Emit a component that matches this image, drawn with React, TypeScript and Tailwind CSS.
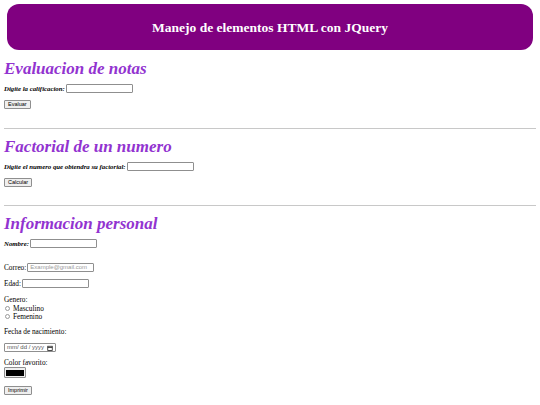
import { useState } from "react";

const serif = "font-['Liberation_Serif',serif]";
const sans = "font-['Liberation_Sans',sans-serif]";

function Heading({ children }: { children: string }) {
  return <h2 className={`${serif} text-[17px] font-bold italic leading-[20px] text-[#9233d0]`}>{children}</h2>;
}

function Field({ w, placeholder }: { w: string; placeholder?: string }) {
  return (
    <input
      type="text"
      placeholder={placeholder}
      className={`${w} ${sans} h-[9px] rounded-[1px] border border-[#8f8f8f] bg-white px-[2px] text-[6px] text-black outline-none placeholder:text-[#9a9a9a]`}
    />
  );
}

function Btn({ children }: { children: string }) {
  return (
    <button
      type="button"
      className={`${sans} h-[9px] rounded-[1px] border border-[#8f8f8f] bg-[#efefef] px-[3px] text-[5.5px] leading-[7px] text-black`}
    >
      {children}
    </button>
  );
}

function Radio({ label, name }: { label: string; name: string }) {
  return (
    <label className="flex h-[8px] items-center gap-[3px] pl-[1px]">
      <span className="h-[5px] w-[5px] rounded-full border border-[#9a9a9a] bg-white" />
      <input type="radio" name={name} className="hidden" />
      {label}
    </label>
  );
}

export default function App() {
  const [color] = useState("#000000");

  return (
    <div className={`${serif} min-h-[405px] bg-white pt-[4px] text-[7.3px] leading-[9px] text-black`}>
      <header className="mx-[7px] flex h-[46px] items-center justify-center rounded-[12px] bg-[#800080]">
        <h1 className={`${serif} pt-[1px] text-[13.5px] font-bold text-white`}>Manejo de elementos HTML con JQuery</h1>
      </header>

      <main className="px-[4px]">
        <section className="pt-[9px]">
          <Heading>Evaluacion de notas</Heading>
          <div className="mt-[5px] flex items-center gap-[1px]">
            <span className="text-[6.8px] font-bold italic">Digite la calificacion:</span>
            <Field w="w-[67px]" />
          </div>
          <div className="mt-[7px] flex">
            <Btn>Evaluar</Btn>
          </div>
        </section>

        <hr className="mt-[19px] border-t border-[#c8c8c8]" />

        <section className="pt-[8px]">
          <Heading>Factorial de un numero</Heading>
          <div className="mt-[5px] flex items-center gap-[1px]">
            <span className="text-[6.8px] font-bold italic">Digite el numero que obtendra su factorial:</span>
            <Field w="w-[67px]" />
          </div>
          <div className="mt-[7px] flex">
            <Btn>Calcular</Btn>
          </div>
        </section>

        <hr className="mt-[18px] border-t border-[#c8c8c8]" />

        <section className="pt-[8px]">
          <Heading>Informacion personal</Heading>
          <div className="mt-[5px] flex items-center gap-[1px]">
            <span className="text-[6.8px] font-bold italic">Nombre:</span>
            <Field w="w-[67px]" />
          </div>
          <div className="mt-[15px] flex items-center gap-[1px]">
            <span>Correo:</span>
            <Field w="w-[67px]" placeholder="Example@gmail.com" />
          </div>
          <div className="mt-[7px] flex items-center gap-[1px]">
            <span>Edad:</span>
            <Field w="w-[67px]" />
          </div>
          <div className="mt-[7px]">Genero:</div>
          <Radio label="Masculino" name="genero" />
          <Radio label="Femenino" name="genero" />
          <div className="mt-[7px]">Fecha de nacimiento:</div>
          <div className="mt-[7px] flex">
            <div
              className={`${sans} flex h-[9px] w-[52px] items-center justify-between rounded-[1px] border border-[#8f8f8f] px-[2px] text-[6px] text-[#555]`}
            >
              <span>mm/ dd / yyyy</span>
              <svg width="6" height="6" viewBox="0 0 12 12" fill="none" stroke="#222" strokeWidth="1.6">
                <rect x="1.5" y="2.5" width="9" height="8.5" />
                <line x1="1.5" y1="5" x2="10.5" y2="5" />
              </svg>
            </div>
          </div>
          <div className="mt-[6px]">Color favorito:</div>
          <div className="flex">
            <div className="flex h-[11px] w-[22px] items-center justify-center rounded-[1px] border border-[#8f8f8f] bg-[#efefef]">
              <div className="h-[6px] w-[18px]" style={{ backgroundColor: color }} />
            </div>
          </div>
          <div className="mt-[8px] flex">
            <Btn>Imprimir</Btn>
          </div>
        </section>
      </main>
    </div>
  );
}
